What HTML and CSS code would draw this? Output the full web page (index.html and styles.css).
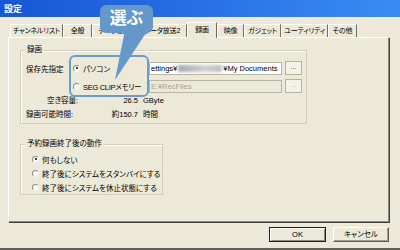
FILE: index.html
```
<!DOCTYPE html>
<html lang="ja">
<head>
    <meta charset="UTF-8">
    <title>設定</title>
    <link rel="stylesheet" href="styles.css">
</head>
<body>
    <div class="window">
        <div class="titlebar">設定</div>
        <div class="content">
            <div class="tabs">
                <span class="tab tab-channel">チャンネルリスト</span>
                <span class="tab tab-general">全般</span>
                <span class="tab tab-data">データ放送</span>
                <span class="tab tab-data2">データ放送2</span>
                <span class="tab active">録画</span>
                <span class="tab tab-video">映像</span>
                <span class="tab tab-gadget">ガジェット</span>
                <span class="tab tab-util">ユーティリティ</span>
                <span class="tab tab-other">その他</span>
            </div>
            <div class="panel">
                <div class="group group-rec">
                    <span class="group-title">録画</span>
                    <div class="dest">
                        <span class="dest-label">保存先指定</span>
                        <span class="opt"><span class="radio checked"></span>パソコン</span>
                        <span class="field">ettings¥<span class="blurred"></span>¥My Documents</span>
                        <span class="btn-small">...</span>
                        <span></span>
                        <span class="opt opt-tight"><span class="radio"></span>SEG CLIPメモリー</span>
                        <span class="field disabled">E:¥RecFiles</span>
                        <span class="btn-small disabled">...</span>
                    </div>
                    <div class="stats">
                        <span class="stat-label free">空き容量:</span>
                        <span class="stat-val">26.5</span>
                        <span class="stat-unit">GByte</span>
                        <span class="stat-label">録画可能時間:</span>
                        <span class="stat-val">約150.7</span>
                        <span class="stat-unit">時間</span>
                    </div>
                </div>
                <div class="group group-after">
                    <span class="group-title">予約録画終了後の動作</span>
                    <span class="opt"><span class="radio checked"></span>何もしない</span>
                    <span class="opt"><span class="radio"></span>終了後にシステムをスタンバイにする</span>
                    <span class="opt"><span class="radio"></span>終了後にシステムを休止状態にする</span>
                </div>
            </div>
            <div class="footer">
                <button class="btn default">OK</button>
                <button class="btn">キャンセル</button>
            </div>
        </div>

        <!-- annotation overlay -->
        <div class="highlight"></div>
        <svg class="callout-tail" width="40" height="52" viewBox="0 0 40 52">
            <polygon points="15,0 38,0 5,50" fill="#6398c8"/>
        </svg>
        <div class="callout">選ぶ</div>
    </div>
</body>
</html>
```

FILE: styles.css
```
* {
    box-sizing: border-box;
}

body {
    margin: 0;
    background: #ece9d8;
    font-family: "Liberation Sans", "Noto Sans CJK JP", sans-serif;
    font-feature-settings: "palt";
    font-size: 7.5px;
    color: #000;
    overflow: hidden;
}

.window {
    position: relative;
    width: 400px;
    height: 250px;
    border-bottom: 2px solid #5e5e5a;
}

.titlebar {
    height: 17px;
    padding: 2px 0 0 4px;
    line-height: 15px;
    font-size: 9px;
    font-weight: bold;
    color: #fff;
    background: linear-gradient(to right, #1656d6, #2a72e8 55%, #3a8cf2);
}

.content {
    padding: 5px 11px 0 8px;
}

/* tab strip */
.tabs {
    display: flex;
    align-items: flex-end;
    height: 15px;
    margin-left: 2px;
}

.tab {
    height: 13px;
    line-height: 12px;
    font-size: 7px;
    letter-spacing: -0.2px;
    text-align: center;
    white-space: nowrap;
    overflow: hidden;
    border-top: 1px solid #fff;
    border-left: 1px solid #fff;
    border-right: 1px solid #716f64;
}

.tab-channel { width: 53px; }
.tab-general { width: 29px; }
.tab-data { width: 45px; }
.tab-data2 { width: 50px; }
.tab-video { width: 27px; }
.tab-gadget { width: 37px; }
.tab-util { width: 47px; }
.tab-other { width: 29px; }

.tab.active {
    position: relative;
    z-index: 1;
    width: 30px;
    height: 16px;
    margin-bottom: -1px;
    line-height: 14px;
    background: #ece9d8;
}

.panel {
    height: 185px;
    padding: 12px 0 0 11px;
    border-top: 1px solid #fff;
    border-left: 1px solid #fff;
    border-right: 1px solid #8d8b80;
    border-bottom: 1px solid #8d8b80;
    box-shadow: 1px 1px 0 #3f3e3a;
}

/* group boxes */
.group {
    position: relative;
    border: 1px solid #d0cebf;
    box-shadow: inset 1px 1px 0 #fff;
}

.group-title {
    position: absolute;
    top: -6px;
    left: 4px;
    padding: 0 2px;
    line-height: 10px;
    background: #ece9d8;
}

.group-rec {
    width: 287px;
    height: 74px;
    padding: 10px 0 0 5px;
}

.group-after {
    display: flex;
    flex-direction: column;
    width: 143px;
    height: 51px;
    margin-top: 20px;
    padding: 7px 0 0 11px;
}

.dest {
    display: grid;
    grid-template-columns: 46px 77px 133px 20px;
    grid-auto-rows: 14px;
    row-gap: 4px;
    align-items: center;
}

.opt {
    display: flex;
    align-items: center;
    gap: 3px;
    height: 14px;
    white-space: nowrap;
}

.dest .opt {
    padding-left: 1px;
}

.opt-tight {
    letter-spacing: -0.3px;
}

.radio {
    position: relative;
    flex-shrink: 0;
    width: 7px;
    height: 7px;
    border-radius: 50%;
    background: #fff;
    border: 1px solid;
    border-color: #8c8a80 #f4f3ee #f4f3ee #8c8a80;
}

.radio.checked::after {
    content: "";
    position: absolute;
    left: 1.5px;
    top: 1.5px;
    width: 2px;
    height: 2px;
    border-radius: 50%;
    background: #000;
}

.field {
    height: 13px;
    padding: 0 1px;
    line-height: 11px;
    white-space: nowrap;
    overflow: hidden;
    background: #fff;
    border: 1px solid #b7b5a8;
}

.field.disabled {
    background: #ece9d8;
    color: #a7a597;
}

.blurred {
    display: inline-block;
    width: 44px;
    height: 7px;
    margin: 0 1px;
    vertical-align: -1px;
    background: linear-gradient(to right, #a6a6a6, #cfcfcf 60%, #bdbdbd);
    filter: blur(1.5px);
}

.btn-small {
    justify-self: end;
    width: 17px;
    height: 14px;
    line-height: 10px;
    text-align: center;
    border: 1px solid #b4b2a6;
    background: #f3f1e8;
    color: #555;
}

.btn-small.disabled {
    color: #bdbbb0;
}

.stats {
    display: grid;
    grid-template-columns: 82px 30px auto;
    grid-auto-rows: 14px;
    margin-top: 1px;
    line-height: 14px;
}

.stat-label.free {
    padding-left: 21px;
}

.stat-val {
    text-align: right;
}

.stat-unit {
    padding-left: 5px;
}

/* dialog buttons */
.footer {
    display: flex;
    justify-content: flex-end;
    gap: 7px;
    margin-top: 5px;
}

.btn {
    width: 56px;
    height: 15px;
    padding: 0;
    font: inherit;
    line-height: 11px;
    color: #000;
    background: #ece9d8;
    border: 1px solid;
    border-color: #fff #5e5d58 #5e5d58 #fff;
    box-shadow: inset -1px -1px 0 #a09e94;
}

.btn.default {
    width: 57px;
    border: 1px solid #1f1f1f;
    box-shadow: inset 1px 1px 0 #fff, inset -1px -1px 0 #8d8b80;
}

/* annotation */
.highlight {
    position: absolute;
    left: 69px;
    top: 55px;
    width: 80px;
    height: 42px;
    border: 2px solid #6a9dcc;
    border-radius: 6px;
}

.callout {
    position: absolute;
    left: 100px;
    top: 5px;
    width: 53px;
    height: 28px;
    border-radius: 6px;
    background: #6398c8;
    color: #fff;
    font-size: 17px;
    font-weight: bold;
    line-height: 28px;
    text-align: center;
}

.callout-tail {
    position: absolute;
    left: 110px;
    top: 30px;
}
```
